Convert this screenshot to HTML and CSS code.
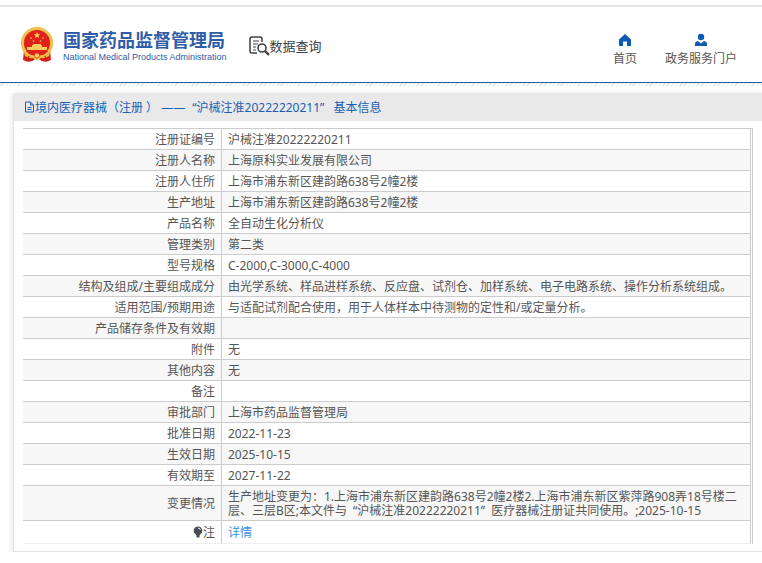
FILE: index.html
```html
<!DOCTYPE html>
<html lang="zh-CN">
  <head>
    <meta charset="UTF-8" />
    <meta name="viewport" content="width=device-width, initial-scale=1.0" />
    <title>国家药品监督管理局 数据查询</title>
    <link rel="stylesheet" href="styles.css">
  </head>
  <body>
    <header class="header">
      <div class="brand">
        <svg class="emblem" viewBox="0 0 34 36" aria-hidden="true">
          <path d="M4 23 L3 33 Q8 36 12 34 L17 31 L22 34 Q26 36 31 33 L30 23 Z" fill="#d9201c" />
          <circle cx="17" cy="16" r="16" fill="#e9b53c" />
          <circle cx="17" cy="16" r="14.500" fill="none" stroke="#f4cf66" stroke-width="1" />
          <circle cx="17" cy="16" r="13" fill="#e0201b" />
          <path d="M17 5 l.9 2.200 2.300.1 -1.800 1.500 .6 2.300 -2-1.300 -2 1.300 .6-2.300 -1.800-1.500 2.300-.1z" fill="#fbd84b" />
          <g fill="#fbd84b">
            <circle cx="11" cy="11" r=".8" />
            <circle cx="23" cy="11" r=".8" />
            <circle cx="13.500" cy="14" r=".8" />
            <circle cx="20.500" cy="14" r=".8" />
          </g>
          <path d="M12 20 v-1.500 l1.500-1.500 h7 l1.500 1.500 V20 h5 v3 H7 v-3z" fill="#f7cf58" />
          <path d="M6 24 h22 l-3 3 q-8 4-16 0z" fill="#e0201b" />
          <path d="M4 25 q5 5 13 3 q8 2 13-3 l-1 4 q-5 3-9 2 l-3 3 -3-3 q-4 1-9-2z" fill="#eebb42" />
          <circle cx="17" cy="28.500" r="2.500" fill="#f7d262" stroke="#d9201c" stroke-width=".7" />
          <path d="M9 29 l-1 5 M25 29 l1 5 M13 31 l-1 3 M21 31 l1 3" stroke="#b91813" stroke-width="1" />
        </svg>
        <div class="brand-text">
          <h1 class="brand-name">国家药品监督管理局</h1>
          <p class="brand-sub">National Medical Products Administration</p>
        </div>
        <div class="section">
          <svg class="section-icon" viewBox="0 0 21 20" fill="none" stroke="#3d4048" aria-hidden="true">
            <path d="M8 17 H3 Q1 17 1 15 V3 Q1 1 3 1 H11 Q13 1 13 3 V6" stroke-width="1.500" />
            <path d="M4 5 h6 M4 8 h5 M4 11 h3 M4 14 h3" stroke-width="1.200" />
            <circle cx="13" cy="12" r="4" stroke-width="1.600" />
            <path d="M16 15 L20 19" stroke-width="2.400" />
          </svg>
          <span>数据查询</span>
        </div>
      </div>
      <nav class="nav">
        <a class="nav-link" href="#">
          <svg class="nav-icon" viewBox="0 0 14 14" aria-hidden="true">
            <path d="M7 1 L1 6.500 V12 Q1 13 2 13 H5 V8.500 H9 V13 H12 Q13 13 13 12 V6.500 Z" fill="#0c5cb4" />
          </svg>
          首页
        </a>
        <a class="nav-link" href="#">
          <svg class="nav-icon" viewBox="0 0 14 14" aria-hidden="true">
            <circle cx="7" cy="4" r="3.200" fill="#0c5cb4" />
            <path d="M1 13 V11 Q1 8.500 4 8 L7 10.500 L10 8 Q13 8.500 13 11 V13 Z" fill="#0c5cb4" />
          </svg>
          政务服务门户
        </a>
      </nav>
    </header>
    <div class="hatch"></div>

    <main class="panel">
      <h2 class="panel-title">
        <svg class="title-icon" viewBox="0 0 11 12" fill="none" stroke="#1a5fb4" aria-hidden="true">
          <path d="M1.500 1 H6.500 L9.500 4 V11 H1.500 Z M6.500 1 V4 H9.500 M3.500 6.500 H7.500 M3.500 8.500 H7.500" />
        </svg>
        <span>境内医疗器械（注册 ） ——<span class="quoted">“沪械注准20222220211”</span>基本信息</span>
      </h2>
      <div class="panel-body">
        <table class="info">
          <tbody>
            <tr><th scope="row">注册证编号</th><td>沪械注准20222220211</td></tr>
            <tr><th scope="row">注册人名称</th><td>上海原科实业发展有限公司</td></tr>
            <tr><th scope="row">注册人住所</th><td>上海市浦东新区建韵路638号2幢2楼</td></tr>
            <tr><th scope="row">生产地址</th><td>上海市浦东新区建韵路638号2幢2楼</td></tr>
            <tr><th scope="row">产品名称</th><td>全自动生化分析仪</td></tr>
            <tr><th scope="row">管理类别</th><td>第二类</td></tr>
            <tr><th scope="row">型号规格</th><td>C-2000,C-3000,C-4000</td></tr>
            <tr><th scope="row">结构及组成/主要组成成分</th><td>由光学系统、样品进样系统、反应盘、试剂仓、加样系统、电子电路系统、操作分析系统组成。</td></tr>
            <tr><th scope="row">适用范围/预期用途</th><td>与适配试剂配合使用，用于人体样本中待测物的定性和/或定量分析。</td></tr>
            <tr><th scope="row">产品储存条件及有效期</th><td></td></tr>
            <tr><th scope="row">附件</th><td>无</td></tr>
            <tr><th scope="row">其他内容</th><td>无</td></tr>
            <tr><th scope="row">备注</th><td></td></tr>
            <tr><th scope="row">审批部门</th><td>上海市药品监督管理局</td></tr>
            <tr><th scope="row">批准日期</th><td>2022-11-23</td></tr>
            <tr><th scope="row">生效日期</th><td>2025-10-15</td></tr>
            <tr><th scope="row">有效期至</th><td>2027-11-22</td></tr>
            <tr class="changes"><th scope="row">变更情况</th><td>生产地址变更为：1.上海市浦东新区建韵路638号2幢2楼2.上海市浦东新区紫萍路908弄18号楼二层、三层B区;本文件与&ensp;“沪械注准20222220211”&ensp;医疗器械注册证共同使用。;2025-10-15</td></tr>
            <tr class="note">
              <th scope="row">
                <svg class="note-icon" viewBox="0 0 10 12" aria-hidden="true">
                  <path d="M5 0.500 A4.300 4.300 0 0 1 7.500 8.300 L6.500 9.500 V11.500 H3.500 V9.500 L2.500 8.300 A4.300 4.300 0 0 1 5 .5Z" fill="#4a4d52" />
                  <path d="M5 2 Q7 2.200 7.500 4" fill="none" stroke="#ffffff" />
                </svg>注</th>
              <td><a class="detail" href="#">详情</a></td>
            </tr>
          </tbody>
        </table>
      </div>
    </main>
  </body>
</html>
```
FILE: styles.css
```css
* {
  box-sizing: border-box;
}
body {
  margin: 0;
  padding-top: 5px;
  background-color: #fff;
  color: #555;
  font-family: "Noto Sans", "Noto Sans CJK SC", sans-serif;
  font-size: 12px;
}
h1,
h2,
p {
  margin: 0;
}
.header {
  display: flex;
  justify-content: space-between;
  align-items: center;
  height: 78px;
  padding: 0 25px 0 20px;
  border-top: 2px solid #e4e4e4;
  border-bottom: 1px solid #1c5fa8;
}
.hatch {
  height: 3px;
  background: repeating-linear-gradient(135deg, #fff 0 2px, #dde6ec 2px 3px);
}
.brand {
  display: flex;
  align-items: center;
}
.emblem {
  width: 34px;
  height: 36px;
}
.brand-text {
  margin-left: 9px;
  padding-top: 3px;
}
.brand-name {
  color: #2f5da8;
  font-family: "Noto Sans CJK SC", sans-serif;
  font-size: 18px;
  font-weight: 700;
  line-height: 22px;
  white-space: nowrap;
}
.brand-sub {
  color: #2f5da8;
  font-family: "Liberation Sans", Arial, sans-serif;
  font-size: 9px;
  line-height: 14px;
  white-space: nowrap;
}
.section {
  display: flex;
  align-items: center;
  margin-left: 22px;
  padding-top: 2px;
  color: #3d4048;
  font-size: 13px;
  line-height: 20px;
  white-space: nowrap;
}
.section-icon {
  width: 21px;
  height: 20px;
}
.nav {
  display: flex;
  gap: 28px;
  padding-top: 12px;
}
.nav-link {
  display: flex;
  flex-direction: column;
  align-items: center;
  gap: 2px;
  color: #555;
  line-height: 20px;
  text-decoration: none;
  white-space: nowrap;
}
.nav-icon {
  width: 14px;
  height: 14px;
}
.panel {
  margin: 7px 0 0 13px;
  border: 1px solid #e6e6e6;
  border-top: none;
  border-right: none;
  box-shadow: 0 1px 6px #ddd;
}
.panel-title {
  display: flex;
  align-items: center;
  height: 28px;
  padding-left: 10px;
  background-color: #e9e9e9;
  color: #1a5fb4;
  font-size: 12px;
  font-weight: 400;
}
.title-icon {
  width: 11px;
  height: 12px;
}
.quoted {
  padding: 0 9px 0 7px;
}
.panel-body {
  padding: 7px 9px;
}
.info {
  width: 100%;
  border-top: 1px solid #ccc;
  border-right: 1px solid #ccc;
  border-spacing: 0;
  padding-right: 1px;
}
.info th,
.info td {
  height: 21px;
  padding: 2px 6px 0;
  border-bottom: 1px solid #ccc;
  border-right: 1px solid #ccc;
  font-weight: 400;
  line-height: 14px;
}
.info th {
  width: 199px;
  text-align: right;
  white-space: nowrap;
}
.info tr:nth-child(even) {
  background-color: #f7f7f7;
}
.info .changes th,
.info .changes td {
  height: 35px;
}
.info .note th,
.info .note td {
  height: 23px;
  border-bottom-color: #eee;
}
.note-icon {
  width: 10px;
  height: 12px;
  vertical-align: -1px;
}
.detail {
  color: #3a8ee6;
  text-decoration: none;
}
```
